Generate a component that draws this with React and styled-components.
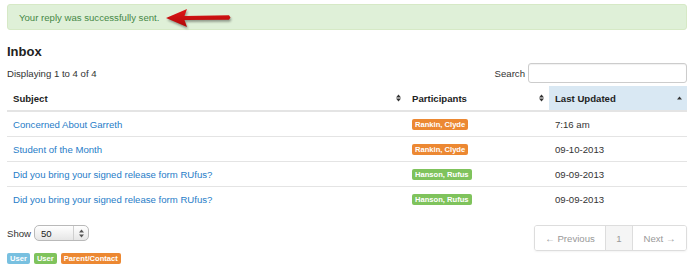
import React from "react";
import styled, { createGlobalStyle } from "styled-components";

const Global = createGlobalStyle`
  html, body { margin: 0; padding: 0; background: #fff; }
  body {
    font-family: "Liberation Sans", Arial, Helvetica, sans-serif;
    font-size: 9.6px;
    color: #333;
  }
`;

const Page = styled.div`
  width: 680px;
  padding: 4px 10px 0 7px;
`;

const Alert = styled.div`
  height: 26px;
  box-sizing: border-box;
  background: #dff0d8;
  border: 1px solid #d6e9c6;
  border-radius: 3px;
  color: #468847;
  display: flex;
  align-items: center;
  padding-left: 11px;
  font-size: 9.6px;
`;

const Arrow = styled.svg`
  margin-left: 6px;
  margin-top: 2px;
  filter: drop-shadow(1px 2px 1px rgba(0, 0, 0, 0.35));
`;

const Heading = styled.h2`
  margin: 14px 0 0;
  font-size: 13px;
  line-height: 16px;
  font-weight: bold;
  color: #222;
`;

const InfoRow = styled.div`
  margin-top: 3px;
  height: 20px;
  display: flex;
  align-items: center;
  justify-content: space-between;
`;

const SearchBox = styled.label`
  display: flex;
  align-items: center;
  gap: 3px;
`;

const Input = styled.input`
  width: 159px;
  height: 20px;
  box-sizing: border-box;
  border: 1px solid #ccc;
  border-radius: 3px;
  box-shadow: inset 0 1px 1px rgba(0, 0, 0, 0.06);
  outline: none;
`;

const Table = styled.table`
  margin-top: 3px;
  width: 680px;
  border-collapse: collapse;
  table-layout: fixed;
`;

const Th = styled.th`
  height: 24px;
  padding: 0 5px 0 6px;
  text-align: left;
  font-weight: bold;
  color: #222;
  border-bottom: 2px solid #e4e4e4;
  background: ${(p) => (p.$active ? "#d9e8f3" : "transparent")};
`;

const ThInner = styled.div`
  display: flex;
  align-items: center;
  justify-content: space-between;
`;

const Td = styled.td`
  height: 24px;
  padding: 0 6px;
  border-top: ${(p) => (p.$first ? "none" : "1px solid #e4e4e4")};
  color: #333;
`;

const Link = styled.a`
  color: #1f7dc8;
  text-decoration: none;
`;

const Label = styled.span`
  display: inline-block;
  height: 11px;
  line-height: 11px;
  padding: 0 3px;
  border-radius: 2px;
  font-size: 7.6px;
  font-weight: bold;
  color: #fff;
  background: ${(p) =>
    p.$kind === "warning" ? "#ec8832" : p.$kind === "success" ? "#7fc35c" : "#78c0e0"};
`;

const Footer = styled.div`
  margin-top: 14px;
  display: flex;
  justify-content: space-between;
  align-items: flex-start;
`;

const FooterLeft = styled.div`
  display: flex;
  flex-direction: column;
`;

const ShowRow = styled.div`
  display: flex;
  align-items: center;
  gap: 3px;
  height: 16px;
`;

const Select = styled.div`
  width: 55px;
  height: 16px;
  box-sizing: border-box;
  border: 1px solid #b9b9b9;
  border-radius: 5px;
  background: linear-gradient(#ffffff, #e6e6e6);
  display: flex;
  align-items: center;
  justify-content: space-between;
  padding-left: 6px;
  color: #222;
`;

const SelectArrows = styled.div`
  width: 14px;
  height: 100%;
  border-left: 1px solid #cfcfcf;
  display: flex;
  align-items: center;
  justify-content: center;
`;

const Legend = styled.div`
  margin-top: 12px;
  display: flex;
  gap: 4px;
`;

const Pagination = styled.div`
  display: flex;
  height: 26px;
  box-sizing: border-box;
  border: 1px solid #ddd;
  border-radius: 3px;
  box-shadow: 0 1px 2px rgba(0, 0, 0, 0.05);
  overflow: hidden;
`;

const PageItem = styled.span`
  display: flex;
  align-items: center;
  justify-content: center;
  width: ${(p) => p.$w}px;
  color: #999;
  background: ${(p) => (p.$active ? "#f5f5f5" : "#fff")};
  border-left: ${(p) => (p.$first ? "none" : "1px solid #ddd")};
`;

const SortBoth = () => (
  <svg width="5" height="8" viewBox="0 0 5 8">
    <polygon points="0,3.4 2.5,0.4 5,3.4" fill="#333" />
    <polygon points="0,4.6 2.5,7.6 5,4.6" fill="#333" />
  </svg>
);

const SortUp = () => (
  <svg width="5" height="4" viewBox="0 0 5 4">
    <polygon points="0,3.5 2.5,0.5 5,3.5" fill="#333" />
  </svg>
);

const rows = [
  { subject: "Concerned About Garreth", who: "Rankin, Clyde", kind: "warning", date: "7:16 am" },
  { subject: "Student of the Month", who: "Rankin, Clyde", kind: "warning", date: "09-10-2013" },
  { subject: "Did you bring your signed release form RUfus?", who: "Hanson, Rufus", kind: "success", date: "09-09-2013" },
  { subject: "Did you bring your signed release form RUfus?", who: "Hanson, Rufus", kind: "success", date: "09-09-2013" },
];

export default function App() {
  return (
    <>
      <Global />
      <Page>
        <Alert>
          Your reply was successfully sent.
          <Arrow width="68" height="22" viewBox="0 0 68 22">
            <defs>
              <linearGradient id="ar" x1="0" y1="0" x2="0" y2="1">
                <stop offset="0" stopColor="#e01818" />
                <stop offset="1" stopColor="#b00808" />
              </linearGradient>
            </defs>
            <polygon
              points="1,11 22,2 19.5,9 64,8.3 65.5,10.5 64,12.8 19.5,13 22,20"
              fill="url(#ar)"
            />
          </Arrow>
        </Alert>
        <Heading>Inbox</Heading>
        <InfoRow>
          <span>Displaying 1 to 4 of 4</span>
          <SearchBox>
            Search
            <Input type="text" />
          </SearchBox>
        </InfoRow>
        <Table>
          <colgroup>
            <col style={{ width: 399 }} />
            <col style={{ width: 143 }} />
            <col style={{ width: 138 }} />
          </colgroup>
          <thead>
            <tr>
              <Th>
                <ThInner>
                  Subject
                  <SortBoth />
                </ThInner>
              </Th>
              <Th>
                <ThInner>
                  Participants
                  <SortBoth />
                </ThInner>
              </Th>
              <Th $active>
                <ThInner>
                  Last Updated
                  <SortUp />
                </ThInner>
              </Th>
            </tr>
          </thead>
          <tbody>
            {rows.map((r, i) => (
              <tr key={i}>
                <Td $first={i === 0}>
                  <Link href="#">{r.subject}</Link>
                </Td>
                <Td $first={i === 0}>
                  <Label $kind={r.kind}>{r.who}</Label>
                </Td>
                <Td $first={i === 0}>{r.date}</Td>
              </tr>
            ))}
          </tbody>
        </Table>
        <Footer>
          <FooterLeft>
            <ShowRow>
              Show
              <Select>
                50
                <SelectArrows>
                  <svg width="5" height="9" viewBox="0 0 5 9">
                    <polygon points="0,3.6 2.5,0.6 5,3.6" fill="#555" />
                    <polygon points="0,5.4 2.5,8.4 5,5.4" fill="#555" />
                  </svg>
                </SelectArrows>
              </Select>
            </ShowRow>
            <Legend>
              <Label $kind="info">User</Label>
              <Label $kind="success">User</Label>
              <Label $kind="warning">Parent/Contact</Label>
            </Legend>
          </FooterLeft>
          <Pagination>
            <PageItem $first $w={70}>← Previous</PageItem>
            <PageItem $active $w={26}>1</PageItem>
            <PageItem $w={53}>Next →</PageItem>
          </Pagination>
        </Footer>
      </Page>
    </>
  );
}
